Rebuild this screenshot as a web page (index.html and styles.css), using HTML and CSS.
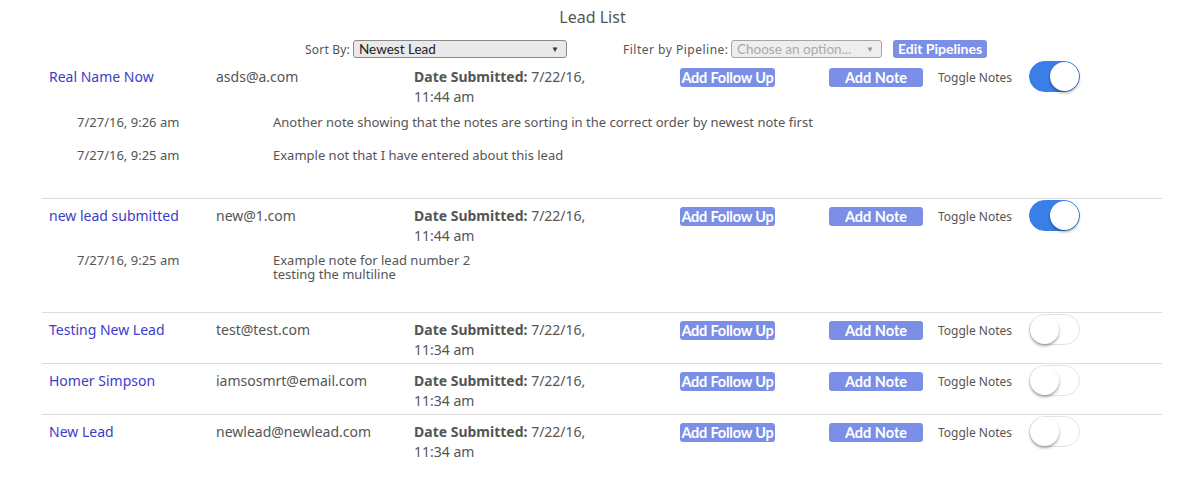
FILE: index.html
```html
<!DOCTYPE html>
<html>
<head>
<meta charset="utf-8">
<link rel="stylesheet" href="styles.css">
</head>
<body>
<div class="page">
  <h1 class="title">Lead List</h1>
  <div class="toolbar">
    <span class="lbl sort-lbl">Sort By:</span>
    <div class="select sort"><span>Newest Lead</span><span class="arrow">▼</span></div>
    <span class="lbl filter-lbl">Filter by Pipeline:</span>
    <div class="select filter"><span>Choose an option...</span><span class="arrow">▼</span></div>
    <span class="btn edit">Edit Pipelines</span>
  </div>

  <div class="lead first">
    <div class="main">
      <a class="name">Real Name Now</a>
      <span class="email">asds@a.com</span>
      <span class="date"><b>Date Submitted:</b> 7/22/16,<br>11:44 am</span>
      <span class="cell"><span class="btn follow">Add Follow Up</span></span>
      <span class="cell"><span class="btn note">Add Note</span></span>
      <span class="toggle-lbl">Toggle Notes</span>
      <span class="switch on"><span class="knob"></span></span>
    </div>
    <div class="notes">
      <div class="n"><span class="nd">7/27/16, 9:26 am</span><span class="nt">Another note showing that the notes are sorting in the correct order by newest note first</span></div>
      <div class="n"><span class="nd">7/27/16, 9:25 am</span><span class="nt">Example not that I have entered about this lead</span></div>
    </div>
  </div>

  <div class="lead">
    <div class="main">
      <a class="name">new lead submitted</a>
      <span class="email">new@1.com</span>
      <span class="date"><b>Date Submitted:</b> 7/22/16,<br>11:44 am</span>
      <span class="cell"><span class="btn follow">Add Follow Up</span></span>
      <span class="cell"><span class="btn note">Add Note</span></span>
      <span class="toggle-lbl">Toggle Notes</span>
      <span class="switch on"><span class="knob"></span></span>
    </div>
    <div class="notes two">
      <div class="n"><span class="nd">7/27/16, 9:25 am</span><span class="nt"><span class="ln">Example note for lead number 2</span><span class="ln">testing the multiline</span></span></div>
    </div>
  </div>

  <div class="lead">
    <div class="main">
      <a class="name">Testing New Lead</a>
      <span class="email">test@test.com</span>
      <span class="date"><b>Date Submitted:</b> 7/22/16,<br>11:34 am</span>
      <span class="cell"><span class="btn follow">Add Follow Up</span></span>
      <span class="cell"><span class="btn note">Add Note</span></span>
      <span class="toggle-lbl">Toggle Notes</span>
      <span class="switch"><span class="knob"></span></span>
    </div>
  </div>

  <div class="lead">
    <div class="main">
      <a class="name">Homer Simpson</a>
      <span class="email">iamsosmrt@email.com</span>
      <span class="date"><b>Date Submitted:</b> 7/22/16,<br>11:34 am</span>
      <span class="cell"><span class="btn follow">Add Follow Up</span></span>
      <span class="cell"><span class="btn note">Add Note</span></span>
      <span class="toggle-lbl">Toggle Notes</span>
      <span class="switch"><span class="knob"></span></span>
    </div>
  </div>

  <div class="lead">
    <div class="main">
      <a class="name">New Lead</a>
      <span class="email">newlead@newlead.com</span>
      <span class="date"><b>Date Submitted:</b> 7/22/16,<br>11:34 am</span>
      <span class="cell"><span class="btn follow">Add Follow Up</span></span>
      <span class="cell"><span class="btn note">Add Note</span></span>
      <span class="toggle-lbl">Toggle Notes</span>
      <span class="switch"><span class="knob"></span></span>
    </div>
  </div>
</div>
</body>
</html>
```
FILE: styles.css
```css
html, body {
  margin: 0;
  padding: 0;
  background: #fff;
}
body {
  font-family: "Noto Sans", "Open Sans", sans-serif;
  color: #555;
}
.page {
  width: 1185px;
}
.title {
  margin: 0;
  padding-top: 6px;
  height: 24px;
  font-size: 16px;
  line-height: 22px;
  font-weight: normal;
  text-align: center;
  color: #555;
}
.toolbar {
  display: flex;
  align-items: center;
  height: 20px;
  margin-top: 9px;
  padding-left: 305px;
}
.lbl {
  font-size: 12px;
  color: #555;
  margin-right: 3px;
  white-space: nowrap;
  flex: none;
}
.sort-lbl {
  width: 45px;
  letter-spacing: 0.2px;
}
.filter-lbl {
  margin-left: 56px;
  width: 105px;
  letter-spacing: 0.5px;
}
.select {
  box-sizing: border-box;
  flex: none;
  height: 18px;
  border: 1px solid #8a8a8a;
  border-radius: 3px;
  background: #e9e9e9;
  display: flex;
  align-items: center;
  justify-content: space-between;
  padding: 0 7px 0 5px;
  font-family: "Lato", sans-serif;
  font-size: 13.5px;
  color: #222;
}
.select .arrow {
  font-size: 8px;
  color: #333;
}
.sort { width: 214px; }
.filter {
  width: 151px;
  background: #eee;
  border-color: #a5a5a5;
  color: #aaa;
}
.filter .arrow { color: #999; }
.btn {
  display: inline-block;
  box-sizing: border-box;
  background: #7b8fe6;
  color: #fff;
  font-family: "Lato", sans-serif;
  font-weight: bold;
  font-size: 14.5px;
  line-height: 19px;
  height: 19px;
  border-radius: 3px;
  text-align: center;
  white-space: nowrap;
}
.edit {
  flex: none;
  margin-left: 11px;
  width: 94px;
  height: 18px;
  line-height: 18px;
  font-size: 14px;
}
.follow { width: 95px; letter-spacing: -0.2px; }
.note { width: 94px; }

.lead {
  margin-left: 42px;
  width: 1120px;
  border-top: 1px solid #dcdcdc;
}
.lead.first {
  border-top: none;
  margin-top: 1px;
}
.main {
  display: grid;
  grid-template-columns: 167px 198px 266px 149px 109px 91px 1fr;
  padding: 7px 0 3px 7px;
  font-size: 14px;
  line-height: 20px;
  align-items: start;
}
.name {
  color: #3c3ccc;
  text-decoration: none;
}
.email { color: #555; }
.date b {
  font-weight: bold;
  color: #555;
}
.cell {
  padding-top: 1px;
  height: 20px;
}
.toggle-lbl {
  font-size: 12px;
  color: #555;
  padding-top: 1px;
}
.switch {
  display: block;
  box-sizing: border-box;
  width: 51px;
  height: 31px;
  margin-top: -6px;
  border-radius: 16px;
  border: 1px solid #e3e3e3;
  background: #fff;
  position: relative;
}
.switch .knob {
  position: absolute;
  top: 0;
  left: 0;
  width: 29px;
  height: 29px;
  border-radius: 50%;
  background: #fff;
  box-shadow: 0 2px 3px rgba(0,0,0,0.35);
}
.switch.on {
  background: #3a7ee8;
  border-color: #3a7ee8;
}
.switch.on .knob {
  left: 20px;
}
.notes {
  padding: 5px 0 36px 35px;
  font-size: 13px;
  line-height: 14px;
}
.notes.two {
  padding-top: 4px;
  padding-bottom: 31px;
}
.n {
  display: flex;
}
.n + .n {
  margin-top: 19px;
}
.nd {
  width: 196px;
  flex: none;
}
.nt { color: #555; }
.ln {
  display: block;
  height: 14px;
  overflow: visible;
}
```
